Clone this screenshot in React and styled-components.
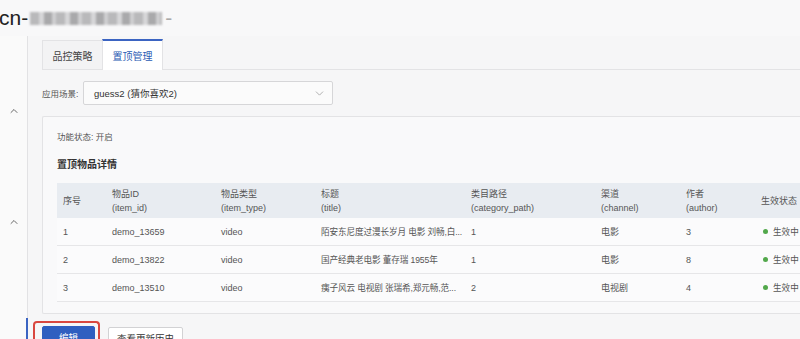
import React from 'react'
import styled, { createGlobalStyle } from 'styled-components'
import { ChevronUp, ChevronDown } from 'lucide-react'

const GlobalStyle = createGlobalStyle`
    html, body {
        margin: 0;
        padding: 0;
        background: #f6f6f7;
        overflow: hidden;
    }
    body {
        font-family: "Helvetica Neue", "Liberation Sans", "Noto Sans CJK SC", sans-serif;
        color: #333;
    }
`

const Page = styled.div`
    width: 800px;
    height: 339px;
    overflow: hidden;
    display: flex;
    flex-direction: column;
`

const TitleBar = styled.div`
    height: 36px;
    flex-shrink: 0;
    display: flex;
    align-items: center;
    font-size: 21px;
    color: #222;
    margin-left: -1px;
    background: #f8f8f9;
`

const Blurred = styled.span`
    display: inline-block;
    width: 132px;
    height: 13px;
    margin: 0 3px 0 2px;
    background: repeating-linear-gradient(90deg, #b9b9bb 0 9px, #d6d6d8 9px 14px, #a9a9ab 14px 22px, #cfcfd1 22px 26px);
    filter: blur(1.2px);
`

const Dash = styled.span`
    color: #aaa;
`

const Body = styled.div`
    flex: 1;
    display: flex;
    min-height: 0;
`

const Sidebar = styled.div`
    width: 27px;
    flex-shrink: 0;
    border-right: 1px solid #e2e2e4;
    background: #fafafa;
    display: flex;
    flex-direction: column;
    align-items: center;
    padding-top: 69px;
    gap: 99px;
    position: relative;
    color: #444;

    &::after {
        content: "";
        position: absolute;
        right: -1px;
        top: 282px;
        bottom: 0;
        width: 2px;
        background: #3b64c2;
    }
`

const Main = styled.div`
    flex: 1;
    padding: 3px 0 0 14px;
    min-width: 0;
`

const Tabs = styled.div`
    display: flex;
    height: 31px;
    border-bottom: 1px solid #e3e3e5;
    box-sizing: border-box;
`

const Tab = styled.div`
    width: 61px;
    box-sizing: border-box;
    display: flex;
    align-items: center;
    justify-content: center;
    font-size: 10px;
    color: ${(props) => (props.active ? '#2b5cb4' : '#444')};
    background: ${(props) => (props.active ? '#ffffff' : '#f3f3f4')};
    border: 1px solid #e3e3e5;
    border-top: ${(props) => (props.active ? '2px solid #3b64c2' : '1px solid #e3e3e5')};
    border-bottom: none;
    height: ${(props) => (props.active ? '31px' : '29px')};
    margin-top: ${(props) => (props.active ? '0' : '1px')};
    margin-left: ${(props) => (props.active ? '-1px' : '0')};
`

const FieldRow = styled.div`
    display: flex;
    align-items: center;
    margin-top: 11px;
    height: 24px;
`

const Label = styled.span`
    font-size: 8.5px;
    color: #555;
    width: 41px;
    white-space: nowrap;
`

const Select = styled.div`
    width: 250px;
    height: 24px;
    box-sizing: border-box;
    border: 1px solid #d6d6d8;
    border-radius: 2px;
    background: #fbfbfb;
    display: flex;
    align-items: center;
    justify-content: space-between;
    padding: 0 6px 0 10px;
    font-size: 9.5px;
    color: #333;
`

const Card = styled.div`
    margin-top: 11px;
    border: 1px solid #e3e3e5;
    border-right: none;
    background: #f9f9fa;
    padding: 13px 0 11px 14px;
    border-radius: 2px 0 0 2px;
`

const Status = styled.div`
    font-size: 8.5px;
    color: #555;
    height: 14px;
    line-height: 14px;
`

const SectionTitle = styled.div`
    font-size: 10px;
    font-weight: bold;
    color: #333;
    margin-top: 13px;
    height: 16px;
    line-height: 16px;
`

const Table = styled.div`
    margin-top: 10px;
    width: 760px;
`

const Row = styled.div`
    display: grid;
    grid-template-columns: 49px 109px 100px 150px 130px 85px 75px 62px;
    height: ${(props) => (props.head ? '35px' : '28px')};
    background: ${(props) => (props.head ? '#e8ecf1' : '#fbfbfc')};
    border-bottom: ${(props) => (props.head ? 'none' : '1px solid #e6e6e8')};
    box-sizing: border-box;
    font-size: 9px;
    color: #555;
`

const Cell = styled.div`
    display: flex;
    flex-direction: column;
    justify-content: center;
    padding-left: 6px;
    line-height: 14px;
    white-space: nowrap;
    overflow: hidden;
`

const TitleCell = styled(Cell)`
    font-size: 8.6px;
    letter-spacing: -0.1px;
`

const StatusCell = styled(Cell)`
    flex-direction: row;
    align-items: center;
    justify-content: flex-start;
    padding-left: 8px;
    font-size: 8.6px;
`

const Dot = styled.span`
    width: 5px;
    height: 5px;
    border-radius: 50%;
    background: #52a84b;
    margin-right: 5px;
`

const Actions = styled.div`
    display: flex;
    align-items: flex-start;
    margin-top: 7px;
    gap: 8px;
`

const Highlight = styled.div`
    margin-left: -9px;
    padding: 3px 3px 0 7px;
    border: 2px solid #d9473f;
    border-bottom: none;
    border-radius: 4px 4px 0 0;
    height: 30px;
`

const Button = styled.button`
    height: 22px;
    box-sizing: border-box;
    padding: 0 ${(props) => (props.primary ? '16px' : '8px')};
    min-width: ${(props) => (props.primary ? '53px' : '68px')};
    font-size: 9.5px;
    font-family: inherit;
    border-radius: 2px;
    border: 1px solid ${(props) => (props.primary ? '#2f5fc0' : '#d2d2d4')};
    background: ${(props) => (props.primary ? '#2f5fc0' : '#ffffff')};
    color: ${(props) => (props.primary ? '#ffffff' : '#333')};
    margin-top: ${(props) => (props.primary ? '0' : '6px')};
`

const rows = [
    ['1', 'demo_13659', 'video', '陌安东尼度过漫长岁月 电影 刘畅,白...', '1', '电影', '3'],
    ['2', 'demo_13822', 'video', '国产经典老电影 董存瑞 1955年', '1', '电影', '8'],
    ['3', 'demo_13510', 'video', '痍子风云 电视剧 张瑞希,郑元畅,范...', '2', '电视剧', '4'],
]

const App = () => {
    return (
        <Page>
            <GlobalStyle />
            <TitleBar>
                cn-<Blurred /><Dash>-</Dash>
            </TitleBar>
            <Body>
                <Sidebar>
                    <ChevronUp size={12} strokeWidth={1.6} />
                    <ChevronUp size={12} strokeWidth={1.6} />
                </Sidebar>
                <Main>
                    <Tabs>
                        <Tab>品控策略</Tab>
                        <Tab active>置顶管理</Tab>
                    </Tabs>
                    <FieldRow>
                        <Label>应用场景:</Label>
                        <Select>
                            guess2 (猜你喜欢2)
                            <ChevronDown size={13} strokeWidth={1.4} color="#999" />
                        </Select>
                    </FieldRow>
                    <Card>
                        <Status>功能状态:&nbsp;开启</Status>
                        <SectionTitle>置顶物品详情</SectionTitle>
                        <Table>
                            <Row head>
                                <Cell>序号</Cell>
                                <Cell><span>物品ID</span><span>(item_id)</span></Cell>
                                <Cell><span>物品类型</span><span>(item_type)</span></Cell>
                                <Cell><span>标题</span><span>(title)</span></Cell>
                                <Cell><span>类目路径</span><span>(category_path)</span></Cell>
                                <Cell><span>渠道</span><span>(channel)</span></Cell>
                                <Cell><span>作者</span><span>(author)</span></Cell>
                                <Cell>生效状态</Cell>
                            </Row>
                            {rows.map((r) => (
                                <Row key={r[0]}>
                                    {r.map((v, i) =>
                                        i === 3 ? <TitleCell key={i}>{v}</TitleCell> : <Cell key={i}>{v}</Cell>
                                    )}
                                    <StatusCell><Dot />生效中</StatusCell>
                                </Row>
                            ))}
                        </Table>
                    </Card>
                    <Actions>
                        <Highlight>
                            <Button primary>编辑</Button>
                        </Highlight>
                        <Button>查看更新历史</Button>
                    </Actions>
                </Main>
            </Body>
        </Page>
    )
}

export default App
